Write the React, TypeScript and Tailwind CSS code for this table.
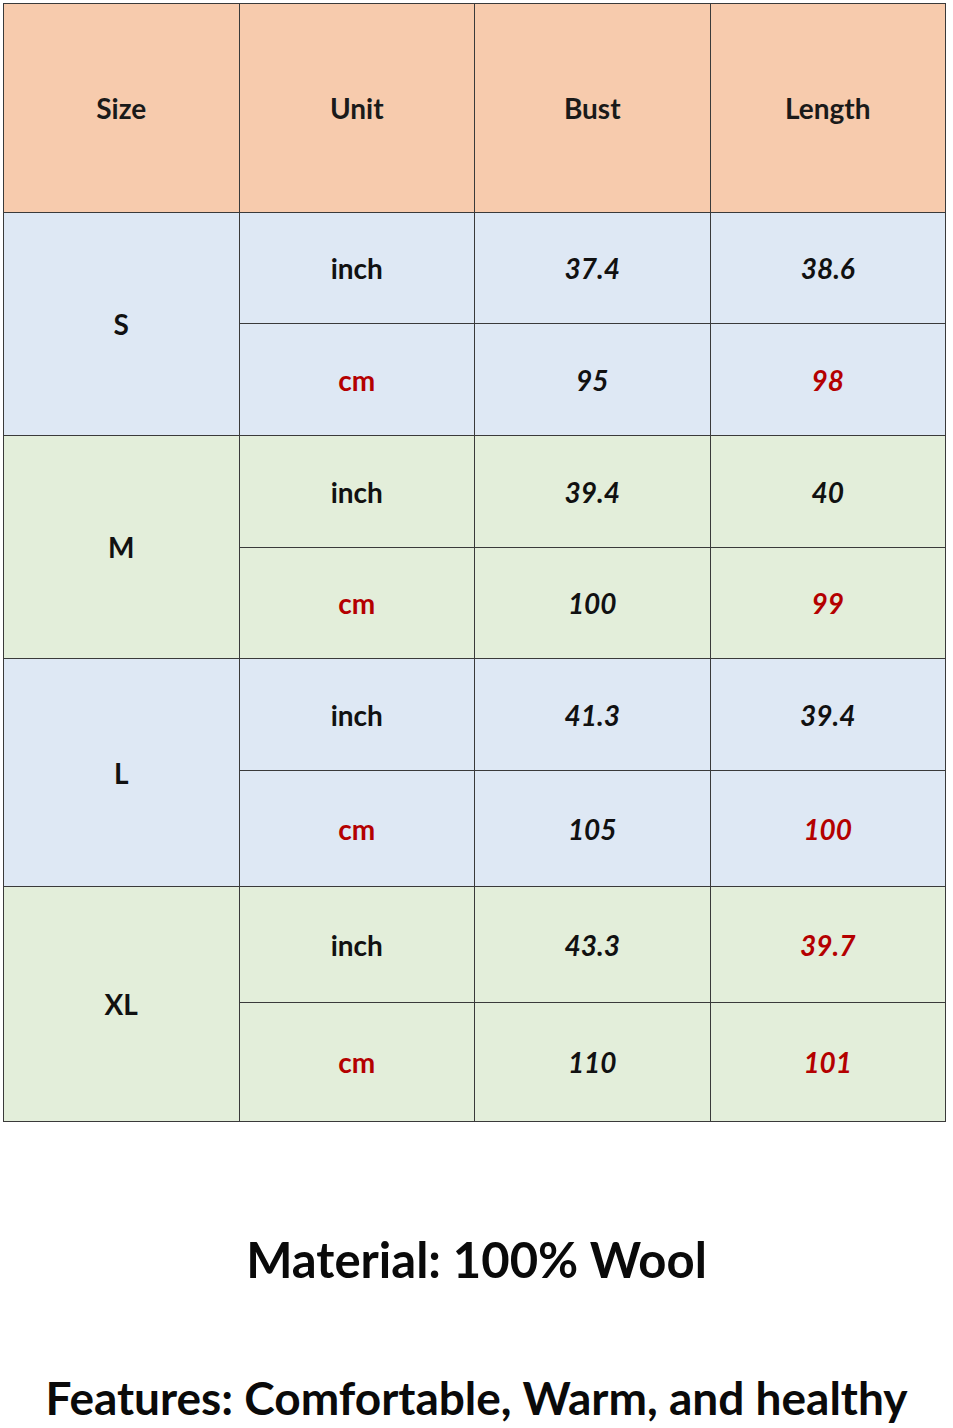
const rows = [
  {
    size: "S",
    bg: "bg-[#dee8f4]",
    h: ["h-[111px]", "h-[112px]"],
    inch: { bust: "37.4", length: "38.6", lengthRed: false },
    cm: { bust: "95", length: "98", lengthRed: true },
  },
  {
    size: "M",
    bg: "bg-[#e3eeda]",
    h: ["h-[112px]", "h-[111px]"],
    inch: { bust: "39.4", length: "40", lengthRed: false },
    cm: { bust: "100", length: "99", lengthRed: true },
  },
  {
    size: "L",
    bg: "bg-[#dee8f4]",
    h: ["h-[112px]", "h-[116px]"],
    inch: { bust: "41.3", length: "39.4", lengthRed: false },
    cm: { bust: "105", length: "100", lengthRed: true },
  },
  {
    size: "XL",
    bg: "bg-[#e3eeda]",
    h: ["h-[116px]", "h-[119px]"],
    inch: { bust: "43.3", length: "39.7", lengthRed: true },
    cm: { bust: "110", length: "101", lengthRed: true },
  },
];

const cell = "border border-[#3a3a3a] text-center align-middle p-0";

export default function App() {
  return (
    <div
      className="w-[953px] h-[1428px] bg-white overflow-hidden"
      style={{ fontFamily: "Lato, 'Open Sans', sans-serif" }}
    >
      <div className="pt-[3px] pl-[3px]">
        <table className="border-collapse w-[943px] table-fixed">
          <thead>
            <tr className="h-[209px] bg-[#f7cbad]">
              {["Size", "Unit", "Bust", "Length"].map((t) => (
                <th key={t} className={`${cell} text-[28px] font-bold text-[#1a1a1a]`}>
                  {t}
                </th>
              ))}
            </tr>
          </thead>
          <tbody>
            {rows.map((r) => (
              <>
                <tr key={r.size + "i"} className={`${r.bg} ${r.h[0]}`}>
                  <td rowSpan={2} className={`${cell} text-[28px] font-bold text-[#111]`}>
                    {r.size}
                  </td>
                  <td className={`${cell} text-[28px] font-bold text-[#111]`}>inch</td>
                  <td className={`${cell} text-[28px] font-bold italic text-[#111]`}>{r.inch.bust}</td>
                  <td
                    className={`${cell} text-[28px] font-bold italic ${
                      r.inch.lengthRed ? "text-[#b40000]" : "text-[#111]"
                    }`}
                  >
                    {r.inch.length}
                  </td>
                </tr>
                <tr key={r.size + "c"} className={`${r.bg} ${r.h[1]}`}>
                  <td className={`${cell} text-[28px] font-bold text-[#b40000]`}>cm</td>
                  <td className={`${cell} text-[28px] font-bold italic text-[#111]`}>{r.cm.bust}</td>
                  <td
                    className={`${cell} text-[28px] font-bold italic ${
                      r.cm.lengthRed ? "text-[#b40000]" : "text-[#111]"
                    }`}
                  >
                    {r.cm.length}
                  </td>
                </tr>
              </>
            ))}
          </tbody>
        </table>
      </div>

      <div className="mt-[113px] text-center text-[49px] font-bold leading-none text-[#0a0a0a]">
        Material: 100% Wool
      </div>
      <div className="mt-[91px] text-center text-[46px] font-bold leading-none text-[#0a0a0a]">
        Features: Comfortable, Warm, and healthy
      </div>
    </div>
  );
}
